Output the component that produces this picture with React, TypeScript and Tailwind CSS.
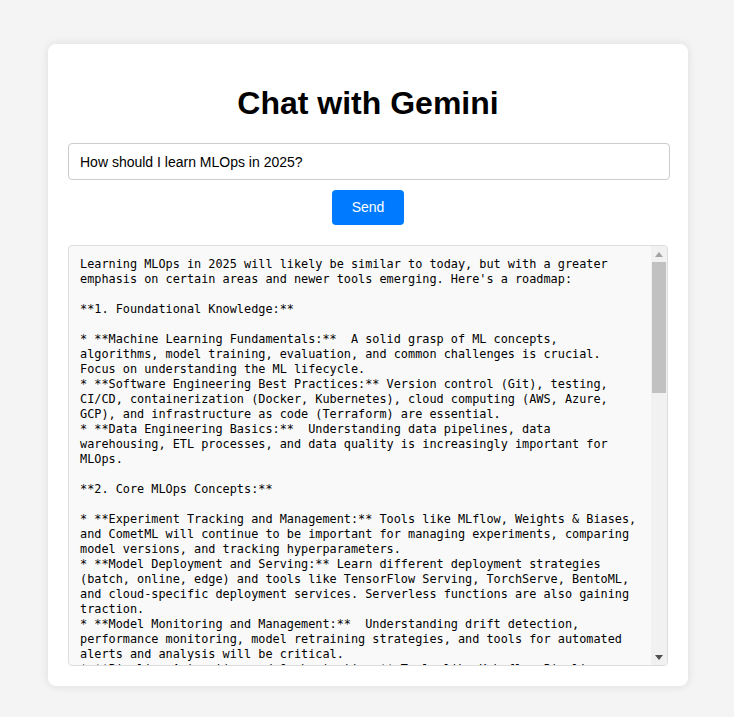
import { useState } from 'react';

const RESPONSE = `Learning MLOps in 2025 will likely be similar to today, but with a greater
emphasis on certain areas and newer tools emerging. Here's a roadmap:

**1. Foundational Knowledge:**

* **Machine Learning Fundamentals:**  A solid grasp of ML concepts,
algorithms, model training, evaluation, and common challenges is crucial.
Focus on understanding the ML lifecycle.
* **Software Engineering Best Practices:** Version control (Git), testing,
CI/CD, containerization (Docker, Kubernetes), cloud computing (AWS, Azure,
GCP), and infrastructure as code (Terraform) are essential.
* **Data Engineering Basics:**  Understanding data pipelines, data
warehousing, ETL processes, and data quality is increasingly important for
MLOps.

**2. Core MLOps Concepts:**

* **Experiment Tracking and Management:** Tools like MLflow, Weights & Biases,
and CometML will continue to be important for managing experiments, comparing
model versions, and tracking hyperparameters.
* **Model Deployment and Serving:** Learn different deployment strategies
(batch, online, edge) and tools like TensorFlow Serving, TorchServe, BentoML,
and cloud-specific deployment services. Serverless functions are also gaining
traction.
* **Model Monitoring and Management:**  Understanding drift detection,
performance monitoring, model retraining strategies, and tools for automated
alerts and analysis will be critical.
* **Pipeline Automation and Orchestration:** Tools like Kubeflow Pipelines,`;

function FakeScrollbar() {
  return (
    <div className="flex w-4 shrink-0 flex-col bg-[#f1f1f1]">
      <div className="flex h-4 items-center justify-center">
        <svg width="8" height="5" viewBox="0 0 8 5">
          <path d="M4 0L8 5H0z" fill="#a3a3a3" />
        </svg>
      </div>
      <div className="flex-1 px-[1px]">
        <div className="h-[131px] bg-[#c1c1c1]" />
      </div>
      <div className="flex h-4 items-center justify-center">
        <svg width="8" height="5" viewBox="0 0 8 5">
          <path d="M0 0H8L4 5z" fill="#505050" />
        </svg>
      </div>
    </div>
  );
}

export default function App() {
  const [prompt, setPrompt] = useState('How should I learn MLOps in 2025?');

  return (
    <div className="min-h-screen bg-[#f4f4f4] pt-[44px] font-['Liberation_Sans',Arial,sans-serif]">
      <div className="ml-[48px] w-[640px] rounded-lg bg-white p-5 shadow-[0_0_10px_rgba(0,0,0,0.1)]">
        <h1 className="my-[21px] text-center text-[32px] font-bold leading-[37px] text-black">
          Chat with Gemini
        </h1>
        <input
          value={prompt}
          onChange={(e) => setPrompt(e.target.value)}
          className="block h-[37px] w-[602px] rounded border border-[#ccc] px-[11px] text-[14px] text-black outline-none"
        />
        <div className="mt-[10px] flex justify-center">
          <button className="h-[35px] w-[72px] rounded bg-[#007bff] text-[14px] text-white">
            Send
          </button>
        </div>
        <div className="mt-5 flex h-[421px] overflow-hidden rounded border border-[#ddd] bg-[#f9f9f9]">
          <div className="min-w-0 flex-1 overflow-hidden pl-[11px] pt-[11px]">
            <pre className="whitespace-pre font-['DejaVu_Sans_Mono',monospace] text-[11.85px] leading-[15px] text-black">
              {RESPONSE}
            </pre>
          </div>
          <FakeScrollbar />
        </div>
      </div>
    </div>
  );
}
